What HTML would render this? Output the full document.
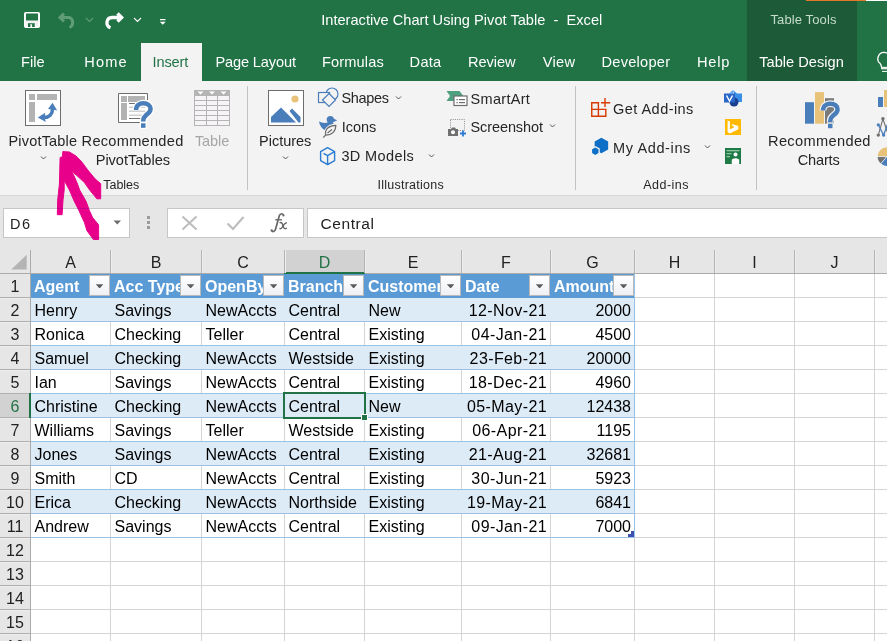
<!DOCTYPE html><html><head><meta charset="utf-8"><title>Excel</title><style>
html,body{margin:0;padding:0;}
body{width:887px;height:641px;overflow:hidden;position:relative;background:#fff;font-family:"Liberation Sans",sans-serif;}
.r{position:absolute;}
.t{position:absolute;white-space:pre;line-height:1;}
.fb{position:absolute;width:21px;height:21px;box-sizing:border-box;border:1px solid #b9b9b9;background:linear-gradient(#ffffff,#eef0f4);}
.fb i{position:absolute;left:5.8px;top:8.2px;width:7.6px;height:4.2px;background:#5c5c5c;clip-path:polygon(0 0,100% 0,50% 100%);}
</style></head><body>
<div class="r" style="left:0px;top:0px;width:887px;height:81px;background:#217346;"></div>
<div class="r" style="left:747px;top:0px;width:110px;height:81px;background:#1d5b38;"></div>
<div class="r" style="left:806px;top:0px;width:60px;height:1px;background:#e4782a;"></div>
<div class="r" style="left:866px;top:0px;width:21px;height:1px;background:#ffffff;"></div>
<div class="t" style="left:321.2px;top:12.94px;font-size:14.6px;color:#fff;letter-spacing:0.016px;">Interactive Chart Using Pivot Table  -  Excel</div>
<div class="t" style="left:770.5px;top:13.00px;font-size:13px;color:#c6dccc;letter-spacing:0.110px;">Table Tools</div>
<div class="r" style="left:141px;top:43px;width:61px;height:38px;background:#f3f3f3;"></div>
<div class="t" style="left:21px;top:54.64px;font-size:14.6px;color:#fff;letter-spacing:0.000px;">File</div>
<div class="t" style="left:84.2px;top:54.64px;font-size:14.6px;color:#fff;letter-spacing:1.200px;">Home</div>
<div class="t" style="left:152.5px;top:54.64px;font-size:14.6px;color:#217346;letter-spacing:-0.140px;">Insert</div>
<div class="t" style="left:215.4px;top:54.64px;font-size:14.6px;color:#fff;letter-spacing:-0.140px;">Page Layout</div>
<div class="t" style="left:322px;top:54.64px;font-size:14.6px;color:#fff;letter-spacing:0.129px;">Formulas</div>
<div class="t" style="left:409.6px;top:54.64px;font-size:14.6px;color:#fff;letter-spacing:0.267px;">Data</div>
<div class="t" style="left:468px;top:54.64px;font-size:14.6px;color:#fff;letter-spacing:-0.040px;">Review</div>
<div class="t" style="left:542.8px;top:54.64px;font-size:14.6px;color:#fff;letter-spacing:0.267px;">View</div>
<div class="t" style="left:601.6px;top:54.64px;font-size:14.6px;color:#fff;letter-spacing:0.237px;">Developer</div>
<div class="t" style="left:697px;top:54.64px;font-size:14.6px;color:#fff;letter-spacing:0.800px;">Help</div>
<div class="t" style="left:759.2px;top:54.64px;font-size:14.6px;color:#fff;letter-spacing:0.018px;">Table Design</div>
<div class="r" style="left:0px;top:81px;width:887px;height:114px;background:#f3f3f3;"></div>
<div class="r" style="left:0px;top:195px;width:887px;height:1px;background:#d6d6d6;"></div>
<div class="r" style="left:247px;top:86px;width:1px;height:104px;background:#c2c2c2;"></div>
<div class="r" style="left:575px;top:86px;width:1px;height:104px;background:#c2c2c2;"></div>
<div class="r" style="left:756px;top:86px;width:1px;height:104px;background:#c2c2c2;"></div>
<div class="t" style="left:8.4px;top:133.83px;font-size:14.5px;color:#262626;letter-spacing:0.200px;">PivotTable</div>
<div class="t" style="left:81.6px;top:133.74px;font-size:14.6px;color:#262626;letter-spacing:0.270px;">Recommended</div>
<div class="t" style="left:95.7px;top:153.44px;font-size:14.6px;color:#262626;letter-spacing:-0.030px;">PivotTables</div>
<div class="t" style="left:194.9px;top:133.83px;font-size:14.5px;color:#a6a6a6;letter-spacing:-0.075px;">Table</div>
<div class="t" style="left:103.2px;top:179.42px;font-size:12.5px;color:#262626;letter-spacing:-0.000px;">Tables</div>
<div class="t" style="left:259.1px;top:133.53px;font-size:14.5px;color:#262626;letter-spacing:-0.029px;">Pictures</div>
<div class="t" style="left:341.5px;top:91.33px;font-size:14.5px;color:#262626;letter-spacing:-0.360px;">Shapes</div>
<div class="t" style="left:341.8px;top:120.43px;font-size:14.5px;color:#262626;letter-spacing:-0.025px;">Icons</div>
<div class="t" style="left:341.4px;top:149.33px;font-size:14.5px;color:#262626;letter-spacing:0.388px;">3D Models</div>
<div class="t" style="left:470.5px;top:91.73px;font-size:14.5px;color:#262626;letter-spacing:0.314px;">SmartArt</div>
<div class="t" style="left:470.5px;top:120.33px;font-size:14.5px;color:#262626;letter-spacing:-0.100px;">Screenshot</div>
<div class="t" style="left:377.5px;top:179.22px;font-size:12.5px;color:#262626;letter-spacing:0.250px;">Illustrations</div>
<div class="t" style="left:613.1px;top:101.53px;font-size:14.5px;color:#262626;letter-spacing:0.450px;">Get Add-ins</div>
<div class="t" style="left:613px;top:140.73px;font-size:14.5px;color:#262626;letter-spacing:0.622px;">My Add-ins</div>
<div class="t" style="left:643.3px;top:179.42px;font-size:12.5px;color:#262626;letter-spacing:0.450px;">Add-ins</div>
<div class="t" style="left:768px;top:133.54px;font-size:14.6px;color:#262626;letter-spacing:0.350px;">Recommended</div>
<div class="t" style="left:797.7px;top:153.14px;font-size:14.6px;color:#262626;letter-spacing:-0.180px;">Charts</div>
<div class="r" style="left:0px;top:196px;width:887px;height:54px;background:#e6e6e6;"></div>
<div class="r" style="left:3px;top:208px;width:127px;height:30px;background:#fff;box-sizing:border-box;border:1px solid #c6c6c6;"></div>
<div class="t" style="left:10px;top:217.23px;font-size:14.5px;color:#222;letter-spacing:1.500px;">D6</div>
<div class="r" style="left:167px;top:208px;width:137px;height:30px;background:#fff;box-sizing:border-box;border:1px solid #c6c6c6;"></div>
<div class="r" style="left:307px;top:208px;width:600px;height:30px;background:#fff;box-sizing:border-box;border:1px solid #c6c6c6;"></div>
<div class="t" style="left:320.5px;top:216.38px;font-size:15.5px;color:#222;letter-spacing:0.583px;">Central</div>
<div class="r" style="left:147px;top:216px;width:3px;height:3px;background:#9b9b9b;"></div>
<div class="r" style="left:147px;top:221px;width:3px;height:3px;background:#9b9b9b;"></div>
<div class="r" style="left:147px;top:226px;width:3px;height:3px;background:#9b9b9b;"></div>
<div class="r" style="left:0px;top:250px;width:887px;height:391px;background:#ffffff;"></div>
<div class="r" style="left:0px;top:250px;width:887px;height:23px;background:#e6e6e6;"></div>
<div class="r" style="left:0px;top:273px;width:887px;height:1px;background:#ababab;"></div>
<div class="r" style="left:0px;top:274px;width:30px;height:367px;background:#e6e6e6;"></div>
<div class="r" style="left:30px;top:250px;width:1px;height:391px;background:#ababab;"></div>
<div class="r" style="left:285px;top:250px;width:79px;height:23px;background:#d2d2d2;"></div>
<div class="r" style="left:284px;top:272px;width:81px;height:2px;background:#217346;"></div>
<div class="r" style="left:0px;top:394px;width:29px;height:23px;background:#d2d2d2;"></div>
<div class="r" style="left:29px;top:394px;width:2px;height:23px;background:#217346;"></div>
<div class="r" style="left:110px;top:250px;width:1px;height:23px;background:#b4b4b4;"></div>
<div class="r" style="left:111px;top:250px;width:1px;height:23px;background:#ededed;"></div>
<div class="r" style="left:201px;top:250px;width:1px;height:23px;background:#b4b4b4;"></div>
<div class="r" style="left:202px;top:250px;width:1px;height:23px;background:#ededed;"></div>
<div class="r" style="left:284px;top:250px;width:1px;height:23px;background:#b4b4b4;"></div>
<div class="r" style="left:285px;top:250px;width:1px;height:23px;background:#ededed;"></div>
<div class="r" style="left:364px;top:250px;width:1px;height:23px;background:#b4b4b4;"></div>
<div class="r" style="left:365px;top:250px;width:1px;height:23px;background:#ededed;"></div>
<div class="r" style="left:461px;top:250px;width:1px;height:23px;background:#b4b4b4;"></div>
<div class="r" style="left:462px;top:250px;width:1px;height:23px;background:#ededed;"></div>
<div class="r" style="left:550px;top:250px;width:1px;height:23px;background:#b4b4b4;"></div>
<div class="r" style="left:551px;top:250px;width:1px;height:23px;background:#ededed;"></div>
<div class="r" style="left:634px;top:250px;width:1px;height:23px;background:#b4b4b4;"></div>
<div class="r" style="left:635px;top:250px;width:1px;height:23px;background:#ededed;"></div>
<div class="r" style="left:714px;top:250px;width:1px;height:23px;background:#b4b4b4;"></div>
<div class="r" style="left:715px;top:250px;width:1px;height:23px;background:#ededed;"></div>
<div class="r" style="left:794px;top:250px;width:1px;height:23px;background:#b4b4b4;"></div>
<div class="r" style="left:795px;top:250px;width:1px;height:23px;background:#ededed;"></div>
<div class="r" style="left:874px;top:250px;width:1px;height:23px;background:#b4b4b4;"></div>
<div class="r" style="left:875px;top:250px;width:1px;height:23px;background:#ededed;"></div>
<div class="t" style="left:-129.5px;width:400px;text-align:center;top:255.46px;font-size:16px;color:#222;">A</div>
<div class="t" style="left:-44.0px;width:400px;text-align:center;top:255.46px;font-size:16px;color:#222;">B</div>
<div class="t" style="left:43.0px;width:400px;text-align:center;top:255.46px;font-size:16px;color:#222;">C</div>
<div class="t" style="left:124.5px;width:400px;text-align:center;top:255.46px;font-size:16px;color:#217346;">D</div>
<div class="t" style="left:213.0px;width:400px;text-align:center;top:255.46px;font-size:16px;color:#222;">E</div>
<div class="t" style="left:306.0px;width:400px;text-align:center;top:255.46px;font-size:16px;color:#222;">F</div>
<div class="t" style="left:392.5px;width:400px;text-align:center;top:255.46px;font-size:16px;color:#222;">G</div>
<div class="t" style="left:474.5px;width:400px;text-align:center;top:255.46px;font-size:16px;color:#222;">H</div>
<div class="t" style="left:554.5px;width:400px;text-align:center;top:255.46px;font-size:16px;color:#222;">I</div>
<div class="t" style="left:634.5px;width:400px;text-align:center;top:255.46px;font-size:16px;color:#222;">J</div>
<div class="t" style="left:714.5px;width:400px;text-align:center;top:255.46px;font-size:16px;color:#222;">K</div>
<div class="r" style="left:110px;top:274px;width:1px;height:367px;background:#d4d4d4;"></div>
<div class="r" style="left:201px;top:274px;width:1px;height:367px;background:#d4d4d4;"></div>
<div class="r" style="left:284px;top:274px;width:1px;height:367px;background:#d4d4d4;"></div>
<div class="r" style="left:364px;top:274px;width:1px;height:367px;background:#d4d4d4;"></div>
<div class="r" style="left:461px;top:274px;width:1px;height:367px;background:#d4d4d4;"></div>
<div class="r" style="left:550px;top:274px;width:1px;height:367px;background:#d4d4d4;"></div>
<div class="r" style="left:634px;top:274px;width:1px;height:367px;background:#d4d4d4;"></div>
<div class="r" style="left:714px;top:274px;width:1px;height:367px;background:#d4d4d4;"></div>
<div class="r" style="left:794px;top:274px;width:1px;height:367px;background:#d4d4d4;"></div>
<div class="r" style="left:874px;top:274px;width:1px;height:367px;background:#d4d4d4;"></div>
<div class="r" style="left:31px;top:297px;width:856px;height:1px;background:#d4d4d4;"></div>
<div class="r" style="left:0px;top:297px;width:30px;height:1px;background:#b0b0b0;"></div>
<div class="r" style="left:0px;top:298px;width:30px;height:1px;background:#ededed;"></div>
<div class="r" style="left:31px;top:321px;width:856px;height:1px;background:#d4d4d4;"></div>
<div class="r" style="left:0px;top:321px;width:30px;height:1px;background:#b0b0b0;"></div>
<div class="r" style="left:0px;top:322px;width:30px;height:1px;background:#ededed;"></div>
<div class="r" style="left:31px;top:345px;width:856px;height:1px;background:#d4d4d4;"></div>
<div class="r" style="left:0px;top:345px;width:30px;height:1px;background:#b0b0b0;"></div>
<div class="r" style="left:0px;top:346px;width:30px;height:1px;background:#ededed;"></div>
<div class="r" style="left:31px;top:369px;width:856px;height:1px;background:#d4d4d4;"></div>
<div class="r" style="left:0px;top:369px;width:30px;height:1px;background:#b0b0b0;"></div>
<div class="r" style="left:0px;top:370px;width:30px;height:1px;background:#ededed;"></div>
<div class="r" style="left:31px;top:393px;width:856px;height:1px;background:#d4d4d4;"></div>
<div class="r" style="left:0px;top:393px;width:30px;height:1px;background:#b0b0b0;"></div>
<div class="r" style="left:0px;top:394px;width:30px;height:1px;background:#ededed;"></div>
<div class="r" style="left:31px;top:417px;width:856px;height:1px;background:#d4d4d4;"></div>
<div class="r" style="left:0px;top:417px;width:30px;height:1px;background:#b0b0b0;"></div>
<div class="r" style="left:0px;top:418px;width:30px;height:1px;background:#ededed;"></div>
<div class="r" style="left:31px;top:441px;width:856px;height:1px;background:#d4d4d4;"></div>
<div class="r" style="left:0px;top:441px;width:30px;height:1px;background:#b0b0b0;"></div>
<div class="r" style="left:0px;top:442px;width:30px;height:1px;background:#ededed;"></div>
<div class="r" style="left:31px;top:465px;width:856px;height:1px;background:#d4d4d4;"></div>
<div class="r" style="left:0px;top:465px;width:30px;height:1px;background:#b0b0b0;"></div>
<div class="r" style="left:0px;top:466px;width:30px;height:1px;background:#ededed;"></div>
<div class="r" style="left:31px;top:489px;width:856px;height:1px;background:#d4d4d4;"></div>
<div class="r" style="left:0px;top:489px;width:30px;height:1px;background:#b0b0b0;"></div>
<div class="r" style="left:0px;top:490px;width:30px;height:1px;background:#ededed;"></div>
<div class="r" style="left:31px;top:513px;width:856px;height:1px;background:#d4d4d4;"></div>
<div class="r" style="left:0px;top:513px;width:30px;height:1px;background:#b0b0b0;"></div>
<div class="r" style="left:0px;top:514px;width:30px;height:1px;background:#ededed;"></div>
<div class="r" style="left:31px;top:537px;width:856px;height:1px;background:#d4d4d4;"></div>
<div class="r" style="left:0px;top:537px;width:30px;height:1px;background:#b0b0b0;"></div>
<div class="r" style="left:0px;top:538px;width:30px;height:1px;background:#ededed;"></div>
<div class="r" style="left:31px;top:561px;width:856px;height:1px;background:#d4d4d4;"></div>
<div class="r" style="left:0px;top:561px;width:30px;height:1px;background:#b0b0b0;"></div>
<div class="r" style="left:0px;top:562px;width:30px;height:1px;background:#ededed;"></div>
<div class="r" style="left:31px;top:585px;width:856px;height:1px;background:#d4d4d4;"></div>
<div class="r" style="left:0px;top:585px;width:30px;height:1px;background:#b0b0b0;"></div>
<div class="r" style="left:0px;top:586px;width:30px;height:1px;background:#ededed;"></div>
<div class="r" style="left:31px;top:609px;width:856px;height:1px;background:#d4d4d4;"></div>
<div class="r" style="left:0px;top:609px;width:30px;height:1px;background:#b0b0b0;"></div>
<div class="r" style="left:0px;top:610px;width:30px;height:1px;background:#ededed;"></div>
<div class="r" style="left:31px;top:633px;width:856px;height:1px;background:#d4d4d4;"></div>
<div class="r" style="left:0px;top:633px;width:30px;height:1px;background:#b0b0b0;"></div>
<div class="r" style="left:0px;top:634px;width:30px;height:1px;background:#ededed;"></div>
<div class="r" style="left:31px;top:657px;width:856px;height:1px;background:#d4d4d4;"></div>
<div class="r" style="left:0px;top:657px;width:30px;height:1px;background:#b0b0b0;"></div>
<div class="r" style="left:0px;top:658px;width:30px;height:1px;background:#ededed;"></div>
<div class="r" style="left:0px;top:394px;width:29px;height:23px;background:#d2d2d2;"></div>
<div class="r" style="left:29px;top:393px;width:2px;height:25px;background:#217346;"></div>
<div class="t" style="left:-185px;width:400px;text-align:center;top:279.46px;font-size:16px;color:#222;">1</div>
<div class="t" style="left:-185px;width:400px;text-align:center;top:303.46px;font-size:16px;color:#222;">2</div>
<div class="t" style="left:-185px;width:400px;text-align:center;top:327.46px;font-size:16px;color:#222;">3</div>
<div class="t" style="left:-185px;width:400px;text-align:center;top:351.46px;font-size:16px;color:#222;">4</div>
<div class="t" style="left:-185px;width:400px;text-align:center;top:375.46px;font-size:16px;color:#222;">5</div>
<div class="t" style="left:-185px;width:400px;text-align:center;top:399.46px;font-size:16px;color:#217346;">6</div>
<div class="t" style="left:-185px;width:400px;text-align:center;top:423.46px;font-size:16px;color:#222;">7</div>
<div class="t" style="left:-185px;width:400px;text-align:center;top:447.46px;font-size:16px;color:#222;">8</div>
<div class="t" style="left:-185px;width:400px;text-align:center;top:471.46px;font-size:16px;color:#222;">9</div>
<div class="t" style="left:-185px;width:400px;text-align:center;top:495.46px;font-size:16px;color:#222;">10</div>
<div class="t" style="left:-185px;width:400px;text-align:center;top:519.46px;font-size:16px;color:#222;">11</div>
<div class="t" style="left:-185px;width:400px;text-align:center;top:543.46px;font-size:16px;color:#222;">12</div>
<div class="t" style="left:-185px;width:400px;text-align:center;top:567.46px;font-size:16px;color:#222;">13</div>
<div class="t" style="left:-185px;width:400px;text-align:center;top:591.46px;font-size:16px;color:#222;">14</div>
<div class="t" style="left:-185px;width:400px;text-align:center;top:615.46px;font-size:16px;color:#222;">15</div>
<div class="t" style="left:-185px;width:400px;text-align:center;top:639.46px;font-size:16px;color:#222;">16</div>
<div class="r" style="left:31px;top:274px;width:603px;height:23px;background:#5b9bd5;"></div>
<div class="r" style="left:31px;top:297px;width:603px;height:1px;background:#5b9bd5;"></div>
<div class="r" style="left:31px;top:298px;width:603px;height:23px;background:#ddebf7;"></div>
<div class="r" style="left:31px;top:321px;width:603px;height:1px;background:#9bc2e6;"></div>
<div class="r" style="left:31px;top:345px;width:603px;height:1px;background:#9bc2e6;"></div>
<div class="r" style="left:31px;top:346px;width:603px;height:23px;background:#ddebf7;"></div>
<div class="r" style="left:31px;top:369px;width:603px;height:1px;background:#9bc2e6;"></div>
<div class="r" style="left:31px;top:393px;width:603px;height:1px;background:#9bc2e6;"></div>
<div class="r" style="left:31px;top:394px;width:603px;height:23px;background:#ddebf7;"></div>
<div class="r" style="left:31px;top:417px;width:603px;height:1px;background:#9bc2e6;"></div>
<div class="r" style="left:31px;top:441px;width:603px;height:1px;background:#9bc2e6;"></div>
<div class="r" style="left:31px;top:442px;width:603px;height:23px;background:#ddebf7;"></div>
<div class="r" style="left:31px;top:465px;width:603px;height:1px;background:#9bc2e6;"></div>
<div class="r" style="left:31px;top:489px;width:603px;height:1px;background:#9bc2e6;"></div>
<div class="r" style="left:31px;top:490px;width:603px;height:23px;background:#ddebf7;"></div>
<div class="r" style="left:31px;top:513px;width:603px;height:1px;background:#9bc2e6;"></div>
<div class="r" style="left:31px;top:537px;width:603px;height:1px;background:#9bc2e6;"></div>
<div class="r" style="left:634px;top:274px;width:1px;height:264px;background:#9bc2e6;"></div>
<div class="r" style="left:31px;top:274px;width:58px;height:23px;overflow:hidden"><div class="t" style="left:3px;top:5.06px;font-size:16px;font-weight:700;color:#fff">Agent</div></div>
<div class="fb" style="left:89px;top:275px"><i></i></div>
<div class="r" style="left:111px;top:274px;width:69px;height:23px;overflow:hidden"><div class="t" style="left:3px;top:5.06px;font-size:16px;font-weight:700;color:#fff">Acc Type</div></div>
<div class="fb" style="left:180px;top:275px"><i></i></div>
<div class="r" style="left:202px;top:274px;width:61px;height:23px;overflow:hidden"><div class="t" style="left:3px;top:5.06px;font-size:16px;font-weight:700;color:#fff">OpenBy</div></div>
<div class="fb" style="left:263px;top:275px"><i></i></div>
<div class="r" style="left:285px;top:274px;width:58px;height:23px;overflow:hidden"><div class="t" style="left:3px;top:5.06px;font-size:16px;font-weight:700;color:#fff">Branch</div></div>
<div class="fb" style="left:343px;top:275px"><i></i></div>
<div class="r" style="left:365px;top:274px;width:75px;height:23px;overflow:hidden"><div class="t" style="left:3px;top:5.06px;font-size:16px;font-weight:700;color:#fff">Customer</div></div>
<div class="fb" style="left:440px;top:275px"><i></i></div>
<div class="r" style="left:462px;top:274px;width:67px;height:23px;overflow:hidden"><div class="t" style="left:3px;top:5.06px;font-size:16px;font-weight:700;color:#fff">Date</div></div>
<div class="fb" style="left:529px;top:275px"><i></i></div>
<div class="r" style="left:551px;top:274px;width:62px;height:23px;overflow:hidden"><div class="t" style="left:3px;top:5.06px;font-size:16px;font-weight:700;color:#fff">Amount</div></div>
<div class="fb" style="left:613px;top:275px"><i></i></div>
<div class="t" style="left:34.5px;top:303.46px;font-size:16px;color:#000;">Henry</div>
<div class="t" style="left:114.5px;top:303.46px;font-size:16px;color:#000;">Savings</div>
<div class="t" style="left:205.5px;top:303.46px;font-size:16px;color:#000;">NewAccts</div>
<div class="t" style="left:288.5px;top:303.46px;font-size:16px;color:#000;">Central</div>
<div class="t" style="left:368.5px;top:303.46px;font-size:16px;color:#000;">New</div>
<div class="t" style="right:340px;top:303.46px;font-size:16px;color:#000;letter-spacing:0.4px;">12-Nov-21</div>
<div class="t" style="right:256px;top:303.46px;font-size:16px;color:#000;">2000</div>
<div class="t" style="left:34.5px;top:327.46px;font-size:16px;color:#000;">Ronica</div>
<div class="t" style="left:114.5px;top:327.46px;font-size:16px;color:#000;">Checking</div>
<div class="t" style="left:205.5px;top:327.46px;font-size:16px;color:#000;">Teller</div>
<div class="t" style="left:288.5px;top:327.46px;font-size:16px;color:#000;">Central</div>
<div class="t" style="left:368.5px;top:327.46px;font-size:16px;color:#000;">Existing</div>
<div class="t" style="right:340px;top:327.46px;font-size:16px;color:#000;letter-spacing:0.4px;">04-Jan-21</div>
<div class="t" style="right:256px;top:327.46px;font-size:16px;color:#000;">4500</div>
<div class="t" style="left:34.5px;top:351.46px;font-size:16px;color:#000;">Samuel</div>
<div class="t" style="left:114.5px;top:351.46px;font-size:16px;color:#000;">Checking</div>
<div class="t" style="left:205.5px;top:351.46px;font-size:16px;color:#000;">NewAccts</div>
<div class="t" style="left:288.5px;top:351.46px;font-size:16px;color:#000;">Westside</div>
<div class="t" style="left:368.5px;top:351.46px;font-size:16px;color:#000;">Existing</div>
<div class="t" style="right:340px;top:351.46px;font-size:16px;color:#000;letter-spacing:0.4px;">23-Feb-21</div>
<div class="t" style="right:256px;top:351.46px;font-size:16px;color:#000;">20000</div>
<div class="t" style="left:34.5px;top:375.46px;font-size:16px;color:#000;">Ian</div>
<div class="t" style="left:114.5px;top:375.46px;font-size:16px;color:#000;">Savings</div>
<div class="t" style="left:205.5px;top:375.46px;font-size:16px;color:#000;">NewAccts</div>
<div class="t" style="left:288.5px;top:375.46px;font-size:16px;color:#000;">Central</div>
<div class="t" style="left:368.5px;top:375.46px;font-size:16px;color:#000;">Existing</div>
<div class="t" style="right:340px;top:375.46px;font-size:16px;color:#000;letter-spacing:0.4px;">18-Dec-21</div>
<div class="t" style="right:256px;top:375.46px;font-size:16px;color:#000;">4960</div>
<div class="t" style="left:34.5px;top:399.46px;font-size:16px;color:#000;">Christine</div>
<div class="t" style="left:114.5px;top:399.46px;font-size:16px;color:#000;">Checking</div>
<div class="t" style="left:205.5px;top:399.46px;font-size:16px;color:#000;">NewAccts</div>
<div class="t" style="left:288.5px;top:399.46px;font-size:16px;color:#000;">Central</div>
<div class="t" style="left:368.5px;top:399.46px;font-size:16px;color:#000;">New</div>
<div class="t" style="right:340px;top:399.46px;font-size:16px;color:#000;letter-spacing:0.4px;">05-May-21</div>
<div class="t" style="right:256px;top:399.46px;font-size:16px;color:#000;">12438</div>
<div class="t" style="left:34.5px;top:423.46px;font-size:16px;color:#000;">Williams</div>
<div class="t" style="left:114.5px;top:423.46px;font-size:16px;color:#000;">Savings</div>
<div class="t" style="left:205.5px;top:423.46px;font-size:16px;color:#000;">Teller</div>
<div class="t" style="left:288.5px;top:423.46px;font-size:16px;color:#000;">Westside</div>
<div class="t" style="left:368.5px;top:423.46px;font-size:16px;color:#000;">Existing</div>
<div class="t" style="right:340px;top:423.46px;font-size:16px;color:#000;letter-spacing:0.4px;">06-Apr-21</div>
<div class="t" style="right:256px;top:423.46px;font-size:16px;color:#000;">1195</div>
<div class="t" style="left:34.5px;top:447.46px;font-size:16px;color:#000;">Jones</div>
<div class="t" style="left:114.5px;top:447.46px;font-size:16px;color:#000;">Savings</div>
<div class="t" style="left:205.5px;top:447.46px;font-size:16px;color:#000;">NewAccts</div>
<div class="t" style="left:288.5px;top:447.46px;font-size:16px;color:#000;">Central</div>
<div class="t" style="left:368.5px;top:447.46px;font-size:16px;color:#000;">Existing</div>
<div class="t" style="right:340px;top:447.46px;font-size:16px;color:#000;letter-spacing:0.4px;">21-Aug-21</div>
<div class="t" style="right:256px;top:447.46px;font-size:16px;color:#000;">32681</div>
<div class="t" style="left:34.5px;top:471.46px;font-size:16px;color:#000;">Smith</div>
<div class="t" style="left:114.5px;top:471.46px;font-size:16px;color:#000;">CD</div>
<div class="t" style="left:205.5px;top:471.46px;font-size:16px;color:#000;">NewAccts</div>
<div class="t" style="left:288.5px;top:471.46px;font-size:16px;color:#000;">Central</div>
<div class="t" style="left:368.5px;top:471.46px;font-size:16px;color:#000;">Existing</div>
<div class="t" style="right:340px;top:471.46px;font-size:16px;color:#000;letter-spacing:0.4px;">30-Jun-21</div>
<div class="t" style="right:256px;top:471.46px;font-size:16px;color:#000;">5923</div>
<div class="t" style="left:34.5px;top:495.46px;font-size:16px;color:#000;">Erica</div>
<div class="t" style="left:114.5px;top:495.46px;font-size:16px;color:#000;">Checking</div>
<div class="t" style="left:205.5px;top:495.46px;font-size:16px;color:#000;">NewAccts</div>
<div class="t" style="left:288.5px;top:495.46px;font-size:16px;color:#000;">Northside</div>
<div class="t" style="left:368.5px;top:495.46px;font-size:16px;color:#000;">Existing</div>
<div class="t" style="right:340px;top:495.46px;font-size:16px;color:#000;letter-spacing:0.4px;">19-May-21</div>
<div class="t" style="right:256px;top:495.46px;font-size:16px;color:#000;">6841</div>
<div class="t" style="left:34.5px;top:519.46px;font-size:16px;color:#000;">Andrew</div>
<div class="t" style="left:114.5px;top:519.46px;font-size:16px;color:#000;">Savings</div>
<div class="t" style="left:205.5px;top:519.46px;font-size:16px;color:#000;">NewAccts</div>
<div class="t" style="left:288.5px;top:519.46px;font-size:16px;color:#000;">Central</div>
<div class="t" style="left:368.5px;top:519.46px;font-size:16px;color:#000;">Existing</div>
<div class="t" style="right:340px;top:519.46px;font-size:16px;color:#000;letter-spacing:0.4px;">09-Jan-21</div>
<div class="t" style="right:256px;top:519.46px;font-size:16px;color:#000;">7000</div>
<div class="r" style="left:283px;top:392px;width:83px;height:27px;background:transparent;box-sizing:border-box;border:2px solid #217346;"></div>
<div class="r" style="left:361px;top:414px;width:7px;height:7px;background:#fff;"></div>
<div class="r" style="left:362px;top:415px;width:5px;height:5px;background:#217346;"></div>
<svg class="r" style="left:628px;top:531px" width="6" height="6"><path d="M0 6 H6 V0 H3 V3 H0 Z" fill="#3b50b0"/></svg>
<svg class="r" style="left:24px;top:12px;" width="16" height="16" viewBox="0 0 16 16"><rect x="0.75" y="0.75" width="14.5" height="14.5" rx="1" fill="#f2f2f2" stroke="#fff" stroke-width="1.5"/><rect x="2" y="1.5" width="12" height="7" fill="#217346"/><rect x="4" y="11.2" width="6.7" height="3.8" fill="#217346"/><rect x="6.3" y="12.2" width="1.8" height="2.8" fill="#f2f2f2"/></svg>
<svg class="r" style="left:56px;top:11px;" width="22" height="19" viewBox="0 0 22 19"><path d="M6 6.5 H13.5 A5.5 5.5 0 0 1 13.5 16.5" fill="none" stroke="#5f9c78" stroke-width="3"/><path d="M8 2.5 L4 6.5 L8 10.5" fill="none" stroke="#5f9c78" stroke-width="3"/></svg>
<svg class="r" style="left:85px;top:17px;" width="9" height="6" viewBox="0 0 9 6"><path d="M1 1 L4.5 4.5 L8 1" fill="none" stroke="#5f9c78" stroke-width="1.1"/></svg>
<svg class="r" style="left:104px;top:11px;" width="22" height="19" viewBox="0 0 22 19"><path d="M15 6.5 H8 A5.3 5.3 0 0 0 6.5 16.8" fill="none" stroke="#fff" stroke-width="3.3"/><path d="M13.5 2.5 L17.5 6.5 L13.5 10.5" fill="none" stroke="#fff" stroke-width="3.5"/></svg>
<svg class="r" style="left:133px;top:17px;" width="9" height="6" viewBox="0 0 9 6"><path d="M1 1 L4.5 4.5 L8 1" fill="none" stroke="#fff" stroke-width="1.1"/></svg>
<svg class="r" style="left:159px;top:18px;" width="8" height="8" viewBox="0 0 8 8"><rect x="1" y="1" width="5.5" height="1.2" fill="#fff"/><path d="M0.8 3.7 H6.7 L3.75 6.8 Z" fill="#fff"/></svg>
<svg class="r" style="left:875px;top:50px;" width="12" height="24" viewBox="0 0 12 24"><path d="M9 2.4 A6.3 6.3 0 0 0 5.2 13.6 Q6.3 15.2 6.5 17" fill="none" stroke="#fff" stroke-width="1.3"/><path d="M9 2.4 A6.3 6.3 0 0 1 15 8" fill="none" stroke="#fff" stroke-width="1.3"/><rect x="6" y="16.8" width="7" height="2.5" fill="#e8efe9"/><rect x="7" y="20.9" width="6" height="1" fill="#fff"/></svg>
<svg class="r" style="left:25px;top:90px;" width="36" height="36" viewBox="0 0 36 36"><rect x="0.5" y="0.5" width="35" height="35" fill="#fff" stroke="#6d6d6d"/><rect x="4" y="4" width="6" height="6" fill="#b3b3b3"/><rect x="12" y="4" width="20" height="6" fill="#b3b3b3"/><rect x="4" y="12" width="6" height="20" fill="#b3b3b3"/><path d="M19 27.5 C24 27.5 27.5 24 27.5 19" fill="none" stroke="#4a7ebb" stroke-width="3.6"/><path d="M12.8 27.5 L20.2 22.8 L19.6 27.5 L20.8 32 Z" fill="#4a7ebb"/><path d="M27.5 12.8 L32.2 20.4 L27.5 19.4 L23 19 Z" fill="#4a7ebb"/></svg>
<svg class="r" style="left:40px;top:155px;" width="8" height="6" viewBox="0 0 8 6"><path d="M1 1.5 L3.5 4 L6 1.5" fill="none" stroke="#555" stroke-width="1"/></svg>
<svg class="r" style="left:118px;top:93px;" width="40" height="40" viewBox="0 0 40 40"><rect x="0.5" y="0.5" width="29" height="29" fill="#fff"/><path d="M29.5 7 V0.5 H0.5 V29.5 H22" fill="none" stroke="#6d6d6d"/><rect x="3" y="3" width="6" height="6" fill="#b3b3b3"/><rect x="10" y="3" width="17" height="6" fill="#b3b3b3"/><rect x="3" y="10" width="6" height="17" fill="#b3b3b3"/><rect x="11" y="10" width="16" height="1" fill="#6d6d6d"/><rect x="11" y="13.5" width="16" height="1.5" fill="#cfcfcf"/><rect x="11" y="17.5" width="16" height="1.5" fill="#cfcfcf"/><rect x="11" y="21.5" width="16" height="1.5" fill="#cfcfcf"/><rect x="11" y="25" width="16" height="1" fill="#6d6d6d"/><g transform="translate(12.8,5)"><path d="M5.25 12 C5.25 7.5 8.5 5.25 12.5 5.25 C17 5.25 19.75 7.7 19.75 11 C19.75 14.5 17 15.5 15 17.5 C13.3 19 12.5 20 12.5 22 V23.5" fill="none" stroke="#fff" stroke-width="6.8"/><rect x="9" y="24" width="7" height="7" fill="#fff"/><path d="M5.25 12 C5.25 7.5 8.5 5.25 12.5 5.25 C17 5.25 19.75 7.7 19.75 11 C19.75 14.5 17 15.5 15 17.5 C13.3 19 12.5 20 12.5 22 V23.5" fill="none" stroke="#4a7ebb" stroke-width="4.5"/><rect x="10.2" y="25.3" width="4.5" height="4.5" fill="#4a7ebb"/></g></svg>
<svg class="r" style="left:194px;top:90px;" width="36" height="36" viewBox="0 0 36 36"><rect x="0" y="0" width="36" height="36" fill="#b4b4b4"/><rect x="1" y="6" width="11" height="4" fill="#f7f4f8"/><rect x="1" y="11" width="11" height="4" fill="#f7f4f8"/><rect x="1" y="16" width="11" height="4" fill="#f7f4f8"/><rect x="1" y="21" width="11" height="4" fill="#f7f4f8"/><rect x="1" y="26" width="11" height="4" fill="#f7f4f8"/><rect x="1" y="31" width="11" height="4" fill="#f7f4f8"/><rect x="13" y="6" width="10" height="4" fill="#f7f4f8"/><rect x="13" y="11" width="10" height="4" fill="#f7f4f8"/><rect x="13" y="16" width="10" height="4" fill="#f7f4f8"/><rect x="13" y="21" width="10" height="4" fill="#f7f4f8"/><rect x="13" y="26" width="10" height="4" fill="#f7f4f8"/><rect x="13" y="31" width="10" height="4" fill="#f7f4f8"/><rect x="24" y="6" width="11" height="4" fill="#f7f4f8"/><rect x="24" y="11" width="11" height="4" fill="#f7f4f8"/><rect x="24" y="16" width="11" height="4" fill="#f7f4f8"/><rect x="24" y="21" width="11" height="4" fill="#f7f4f8"/><rect x="24" y="26" width="11" height="4" fill="#f7f4f8"/><rect x="24" y="31" width="11" height="4" fill="#f7f4f8"/><path d="M3.5 1.5 H9.5 L6.5 4.5 Z" fill="#fff"/><path d="M15 1.5 H21 L18 4.5 Z" fill="#fff"/><path d="M26.5 1.5 H32.5 L29.5 4.5 Z" fill="#fff"/></svg>
<svg class="r" style="left:268px;top:90px;" width="36" height="36" viewBox="0 0 36 36"><rect x="0.5" y="0.5" width="35" height="35" fill="#fff" stroke="#6d6d6d"/><circle cx="27" cy="9" r="3.6" fill="#e9c27a"/><path d="M3 32.5 V27 L13 17.5 L28 32.5 Z" fill="#4a7ebb"/><path d="M21.5 21 L24 18.5 L32.5 27 V32.5 H30.5 Z" fill="#4a7ebb"/></svg>
<svg class="r" style="left:282px;top:155px;" width="8" height="6" viewBox="0 0 8 6"><path d="M1 1.5 L3.5 4 L6 1.5" fill="none" stroke="#555" stroke-width="1"/></svg>
<svg class="r" style="left:317px;top:87px;" width="22" height="22" viewBox="0 0 22 22"><circle cx="15" cy="7" r="6" fill="none" stroke="#4a7ebb" stroke-width="1.2"/><rect x="1.5" y="5.5" width="11" height="10" fill="#f3f3f3" stroke="#4a7ebb" stroke-width="1.2"/><path d="M12 6.5 L18.5 13 L12 19.5 L5.5 13 Z" fill="#f3f3f3" stroke="#4a7ebb" stroke-width="1.2"/></svg>
<svg class="r" style="left:395px;top:95px;" width="8" height="6" viewBox="0 0 8 6"><path d="M1 1.5 L3.5 4 L6 1.5" fill="none" stroke="#555" stroke-width="1"/></svg>
<svg class="r" style="left:318px;top:116px;" width="21" height="22" viewBox="0 0 21 22"><circle cx="12.3" cy="3.6" r="3.6" fill="#4a7ebb"/><path d="M14.5 2.2 L19.3 4.3 L14.5 6.6 Z" fill="#4a7ebb"/><path d="M1 5.6 C4 7.2 8 7.3 10 6.2 L15.2 6.4 C16 9.5 14.5 12.5 11.5 14.2 C7.5 15.8 2.5 13 1 5.6 Z" fill="#4a7ebb"/><path d="M7.6 19.2 C6.6 13.2 11 9.3 17.8 9.3 C17.9 15 14.2 19.2 7.6 19.2 Z" fill="#f3f3f3" stroke="#f3f3f3" stroke-width="3"/><path d="M7.6 19.2 C6.6 13.2 11 9.3 17.8 9.3 C17.9 15 14.2 19.2 7.6 19.2 Z" fill="#f3f3f3" stroke="#6d6d6d" stroke-width="1.2"/><path d="M9.5 17 L14 13.5 M7.6 19.2 L5.3 21.5" stroke="#6d6d6d" stroke-width="1.2"/></svg>
<svg class="r" style="left:319px;top:146px;" width="18" height="20" viewBox="0 0 18 20"><path d="M8.6 1.6 L15.6 5.6 V14.6 L8.6 18.6 L1.6 14.6 V5.6 Z M4.5 7.3 L8.6 9.6 L15.6 5.6 M8.6 9.6 V18.6" fill="none" stroke="#2b7cd3" stroke-width="1.4" stroke-linejoin="round"/></svg>
<svg class="r" style="left:428px;top:153px;" width="8" height="6" viewBox="0 0 8 6"><path d="M1 1.5 L3.5 4 L6 1.5" fill="none" stroke="#555" stroke-width="1"/></svg>
<svg class="r" style="left:446px;top:90px;" width="23" height="17" viewBox="0 0 23 17"><path d="M0.5 1 H13.5 L17 5.5 L13.5 11 H0.5 L4 6 Z" fill="#4fa07f"/><rect x="8" y="6" width="13" height="9.5" fill="#fff" stroke="#6d6d6d" stroke-width="1.2"/><rect x="10.5" y="9" width="1.3" height="1.3" fill="#6d6d6d"/><rect x="13" y="9" width="6" height="1.2" fill="#6d6d6d"/><rect x="10.5" y="12" width="1.3" height="1.3" fill="#6d6d6d"/><rect x="13" y="12" width="6" height="1.2" fill="#6d6d6d"/></svg>
<svg class="r" style="left:447px;top:118px;" width="22" height="20" viewBox="0 0 22 20"><rect x="3.5" y="1.5" width="14" height="11" fill="none" stroke="#8a8a8a" stroke-width="1" stroke-dasharray="1 1.2"/><path d="M1 11 H4 L5 9.5 H8 L9 11 H11 V18 H1 Z" fill="#707070"/><circle cx="6" cy="14.3" r="2" fill="#fff"/><path d="M16 12.5 V18.5 M13 15.5 H19" stroke="#2b7cd3" stroke-width="1.8"/></svg>
<svg class="r" style="left:549px;top:123px;" width="8" height="6" viewBox="0 0 8 6"><path d="M1 1.5 L3.5 4 L6 1.5" fill="none" stroke="#555" stroke-width="1"/></svg>
<svg class="r" style="left:590px;top:97px;" width="22" height="21" viewBox="0 0 22 21"><path d="M1.75 19.25 V5.75 H8.4 V19.25 Z M1.75 12.4 H15.8 V19.25 H8.4" fill="none" stroke="#d83b01" stroke-width="1.4"/><path d="M15 1 V10 M11 5.75 H20.2" stroke="#d83b01" stroke-width="1.4"/></svg>
<svg class="r" style="left:588px;top:135px;" width="24" height="24" viewBox="0 0 24 24"><path d="M13.40 2.70 L20.15 6.60 L20.15 14.40 L13.40 18.30 L6.65 14.40 L6.65 6.60 Z" fill="#0f6fc6"/><path d="M7.30 11.00 L11.80 13.60 L11.80 18.80 L7.30 21.40 L2.80 18.80 L2.80 13.60 Z" fill="#f3f3f3"/><path d="M7.30 12.50 L10.50 14.35 L10.50 18.05 L7.30 19.90 L4.10 18.05 L4.10 14.35 Z" fill="#0f6fc6"/></svg>
<svg class="r" style="left:704px;top:144px;" width="8" height="6" viewBox="0 0 8 6"><path d="M1 1.5 L3.5 4 L6 1.5" fill="none" stroke="#555" stroke-width="1"/></svg>
<svg class="r" style="left:723px;top:89px;" width="20" height="18" viewBox="0 0 20 18"><path d="M10 1 L14 4.5 H19 V13 H13 Z" fill="#3a8ee6"/><path d="M10 1 L6 4.5 H10 Z" fill="#5aa6f0"/><circle cx="11" cy="13" r="4.5" fill="#1a3f8f"/><rect x="1" y="4.5" width="11" height="9" fill="#2966c8"/><path d="M3.5 6.5 L6.5 12 L9.5 6.5" fill="none" stroke="#fff" stroke-width="1.4"/></svg>
<svg class="r" style="left:725px;top:119px;" width="16" height="16" viewBox="0 0 16 16"><rect x="0" y="0" width="16" height="16" fill="#ffb900"/><path d="M2.6 1.6 L4.9 2.4 V10.6 L9.6 8 L7.6 7.1 L6.6 4.9 L13.3 7.1 V10.2 L4.9 14.6 L2.6 13.2 Z" fill="#fff"/></svg>
<svg class="r" style="left:725px;top:148px;" width="16" height="16" viewBox="0 0 16 16"><rect x="0" y="0" width="16" height="16" fill="#1e7b45"/><rect x="1.5" y="2" width="13" height="1.3" fill="#8fc4a3"/><rect x="1.5" y="5" width="5" height="1.3" fill="#8fc4a3"/><rect x="1.5" y="8" width="3.5" height="1.3" fill="#8fc4a3"/><circle cx="10.5" cy="6.5" r="2" fill="#fff"/><path d="M6.8 16 V11.5 Q10.5 8.8 14.2 11.5 V16 Z" fill="#fff"/></svg>
<svg class="r" style="left:800px;top:86px;" width="44" height="46" viewBox="0 0 44 46"><rect x="5" y="16.2" width="9" height="21.5" fill="#4a7ebb"/><rect x="15" y="6.1" width="9" height="31.6" fill="#e9c27a"/><rect x="25" y="12.2" width="9" height="25.5" fill="#7a7a7a"/><g transform="translate(17.8,12.4)"><path d="M5.25 12 C5.25 7.5 8.5 5.25 12.5 5.25 C17 5.25 19.75 7.7 19.75 11 C19.75 14.5 17 15.5 15 17.5 C13.3 19 12.5 20 12.5 22 V23.5" fill="none" stroke="#f3f3f3" stroke-width="6.8"/><rect x="9" y="24" width="7" height="7" fill="#f3f3f3"/><path d="M5.25 12 C5.25 7.5 8.5 5.25 12.5 5.25 C17 5.25 19.75 7.7 19.75 11 C19.75 14.5 17 15.5 15 17.5 C13.3 19 12.5 20 12.5 22 V23.5" fill="none" stroke="#4a7ebb" stroke-width="4.5"/><rect x="10.2" y="25.3" width="4.5" height="4.5" fill="#4a7ebb"/></g></svg>
<svg class="r" style="left:877px;top:88px;" width="10" height="20" viewBox="0 0 10 20"><rect x="1" y="9" width="5" height="10" fill="#4a7ebb"/><rect x="7" y="2" width="5" height="17" fill="#e9c27a"/></svg>
<svg class="r" style="left:870px;top:110px;" width="17" height="30" viewBox="0 0 17 30"><path d="M8.3 25.1 L12.9 8.8 L18 24" fill="none" stroke="#707070" stroke-width="1.1"/><path d="M8.3 14.8 L13.6 25.1 L18 13" fill="none" stroke="#4a7ebb" stroke-width="1.3"/><circle cx="12.9" cy="8.8" r="1.7" fill="#707070"/><circle cx="8.3" cy="25.1" r="1.7" fill="#707070"/><circle cx="8.3" cy="14.8" r="1.6" fill="#4a7ebb"/><circle cx="13.6" cy="25.1" r="1.6" fill="#4a7ebb"/></svg>
<svg class="r" style="left:870px;top:140px;" width="17" height="30" viewBox="0 0 17 30"><path d="M16.9 16.6 H7.6 A9.3 9.3 0 0 1 26.2 16.6 Z" fill="#e9c27a"/><path d="M16.9 16.6 L7.6 16.6 A9.3 9.3 0 0 0 10.8 23.6 Z" fill="#707070"/><path d="M16.9 16.6 L10.8 23.6 A9.3 9.3 0 0 0 26.2 16.6 Z" fill="#4a7ebb"/><path d="M16.9 16.6 H7 M16.9 16.6 L10.5 24" stroke="#f3f3f3" stroke-width="0.8"/></svg>
<svg class="r" style="left:113px;top:220px;" width="9" height="6" viewBox="0 0 9 6"><path d="M0.5 0.5 H8 L4.25 4.5 Z" fill="#6d6d6d"/></svg>
<svg class="r" style="left:181px;top:215px;" width="17" height="16" viewBox="0 0 17 16"><path d="M1.5 1.5 L15.5 14.5 M15.5 1.5 L1.5 14.5" stroke="#bdbdbd" stroke-width="2"/></svg>
<svg class="r" style="left:226px;top:215px;" width="19" height="16" viewBox="0 0 19 16"><path d="M1.5 8.5 L7 14 L17.5 2" fill="none" stroke="#bdbdbd" stroke-width="2.2"/></svg>
<svg class="r" style="left:265px;top:208px;" width="30" height="30" viewBox="0 0 30 30"><g transform="translate(-265,-208)" fill="none" stroke="#666"><path d="M283.7 215.6 C283.3 213.3 280.3 212.8 279.2 216 L275.6 229 C274.8 232 272.6 232.2 271.4 230.3" stroke-width="1.7"/><circle cx="283.4" cy="215.6" r="1" fill="#666" stroke="none"/><circle cx="271.6" cy="230.3" r="1.1" fill="#666" stroke="none"/><path d="M275.2 219.8 H282" stroke-width="1.3"/><path d="M279.6 222.8 C281.3 222 282.3 223 282.8 225 L283.6 227.3 C284.2 229 285.4 229 287 228" stroke-width="1.4"/><path d="M286.8 222.6 C285 223 283.3 225.3 282.2 227.3 C281.6 228.5 280.6 229 279.4 228.4" stroke-width="1.4"/></g></svg>
<svg class="r" style="left:10px;top:253px;" width="18" height="18" viewBox="0 0 18 18"><path d="M1.2 16.5 H16.7 V1.7 Z" fill="#b4b4b4"/></svg>
<svg class="r" style="left:0;top:0;z-index:50;mix-blend-mode:darken" width="887" height="641"><polygon points="62.8,151.6 69.4,152.0 76.0,156.0 82.0,162.2 87.7,169.9 95.0,178.8 100.7,183.7 100.7,198.8 96.8,198.8 94.2,195.5 90.1,190.6 84.4,182.5 76.3,175.0 71.0,171.1 73.9,175.6 77.5,184.0 79.6,190.0 86.1,201.4 89.3,210.3 92.6,217.6 98.6,224.9 98.6,239.5 93.4,239.5 86.9,230.6 84.4,222.4 78.8,210.3 73.9,200.5 69.4,190.0 64.2,180.4 64.2,190.0 63.0,200.0 62.1,214.7 57.3,214.7 57.7,200.0 59.4,184.0 60.1,157.5 62.5,156.7" fill="#e8008a" stroke="#e8008a" stroke-width="1" stroke-linejoin="round"/></svg>
</body></html>
